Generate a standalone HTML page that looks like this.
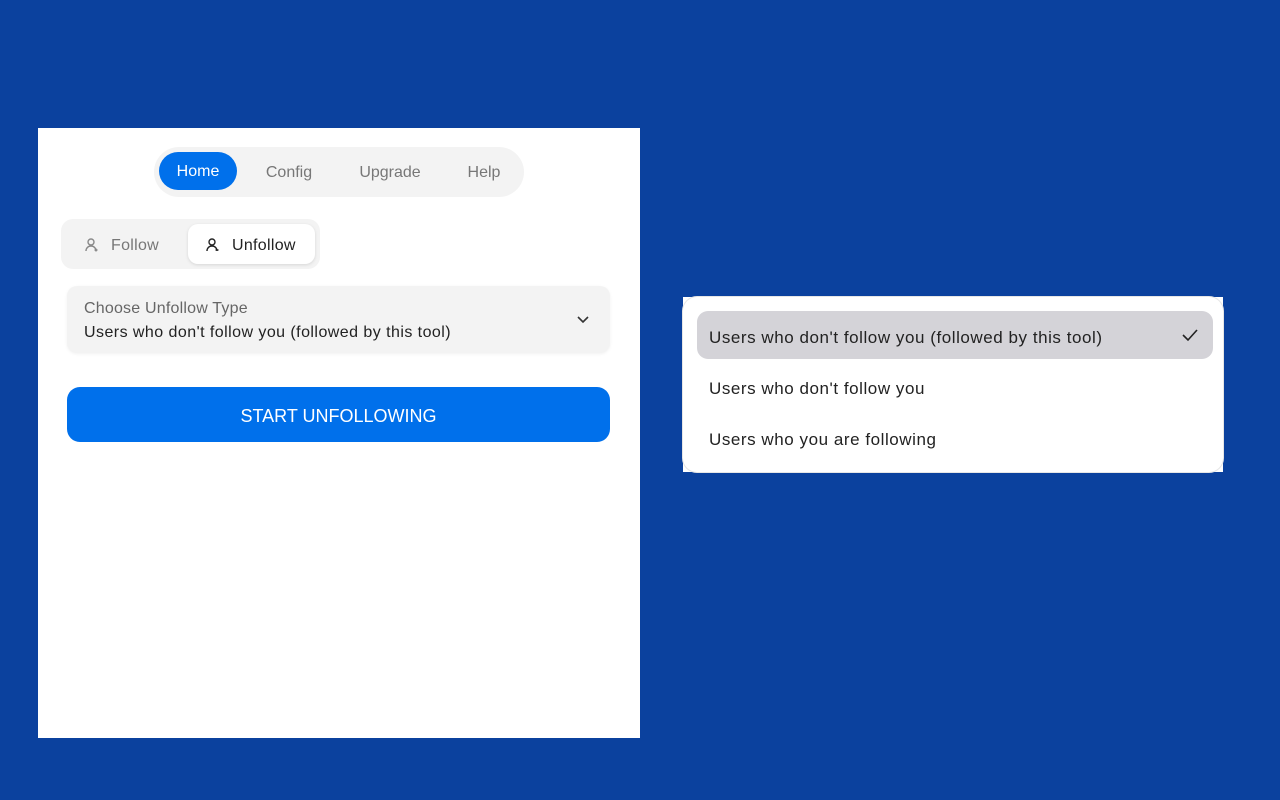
<!DOCTYPE html>
<html><head><style>
*{margin:0;padding:0;box-sizing:border-box}
body{width:1280px;height:800px;background:#0b419e;font-family:"Liberation Sans",sans-serif;position:relative;overflow:hidden}
.abs{position:absolute}
.panel{left:38px;top:128px;width:602px;height:610px;background:#fff}
.nav{left:154px;top:147px;width:370px;height:50px;background:#f3f3f3;border-radius:25px}
.home{left:159px;top:152px;width:78px;height:38px;background:#0070eb;border-radius:19px;color:#fff;font-size:16px;line-height:40px;text-align:center}
.nt{top:153px;line-height:40px;font-size:16px;color:#777;transform:translateX(-50%)}
.seg{left:61px;top:219px;width:259px;height:50px;background:#f3f3f3;border-radius:12px}
.unf{left:188px;top:224px;width:127px;height:40px;background:#fff;border-radius:10px;box-shadow:0 1px 3px rgba(0,0,0,.12)}
.sel{left:67px;top:286px;width:543px;height:67px;background:#f3f3f3;border-radius:10px;box-shadow:0 1px 3px rgba(0,0,0,.06)}
.btn{left:67px;top:387px;width:543px;height:55px;background:#0070eb;border-radius:13px;color:#fff;font-size:18px;line-height:58px;text-align:center}
.dd{left:683px;top:297px;width:540px;height:175px;background:#fff;border-radius:14px;box-shadow:0 0 0 1px #e6e6e6}
.item{left:709px;font-size:17px;color:#222;letter-spacing:0.55px}
</style></head><body>
<div class="abs panel"></div>
<div class="abs nav"></div>
<div class="abs home">Home</div>
<div class="abs nt" style="left:289px">Config</div>
<div class="abs nt" style="left:390px">Upgrade</div>
<div class="abs nt" style="left:484px">Help</div>
<div class="abs seg"></div>
<div class="abs unf"></div>
<svg class="abs" style="left:84px;top:237px" width="16" height="16" viewBox="0 0 16 16" fill="none" stroke="#888" stroke-width="1.4"><circle cx="7" cy="5" r="3"/><path d="M2 14c0-3 2.3-5 5-5s5 2 5 5"/><path d="M12 11.5v3M10.5 13h3"/></svg>
<div class="abs" style="left:111px;top:237px;font-size:16px;color:#777;letter-spacing:.3px">Follow</div>
<svg class="abs" style="left:205px;top:237px" width="16" height="16" viewBox="0 0 16 16" fill="none" stroke="#222" stroke-width="1.4"><circle cx="7" cy="5" r="3"/><path d="M2 14c0-3 2.3-5 5-5s5 2 5 5"/><path d="M10.5 13h3"/></svg>
<div class="abs" style="left:232px;top:237px;font-size:16px;color:#222;letter-spacing:.3px">Unfollow</div>
<div class="abs sel"></div>
<div class="abs" style="left:84px;top:300px;font-size:16px;color:#666;letter-spacing:.2px">Choose Unfollow Type</div>
<div class="abs" style="left:84px;top:324px;font-size:16px;color:#222;letter-spacing:.45px">Users who don't follow you (followed by this tool)</div>
<svg class="abs" style="left:576px;top:315px" width="14" height="10" viewBox="0 0 14 10" fill="none" stroke="#333" stroke-width="1.6"><path d="M2 2l5 5 5-5"/></svg>
<div class="abs btn">START UNFOLLOWING</div>
<div class="abs" style="left:683px;top:297px;width:540px;height:175px;background:#fff"></div>
<div class="abs dd"></div>
<div class="abs" style="left:697px;top:311px;width:516px;height:48px;background:#d4d3d8;border-radius:11px"></div>
<div class="abs item" style="top:328px">Users who don't follow you (followed by this tool)</div>
<svg class="abs" style="left:1181px;top:328px" width="18" height="14" viewBox="0 0 18 14" fill="none" stroke="#222" stroke-width="1.6"><path d="M2 7l5 5 9-10"/></svg>
<div class="abs item" style="top:379px">Users who don't follow you</div>
<div class="abs item" style="top:430px">Users who you are following</div>
</body></html>
